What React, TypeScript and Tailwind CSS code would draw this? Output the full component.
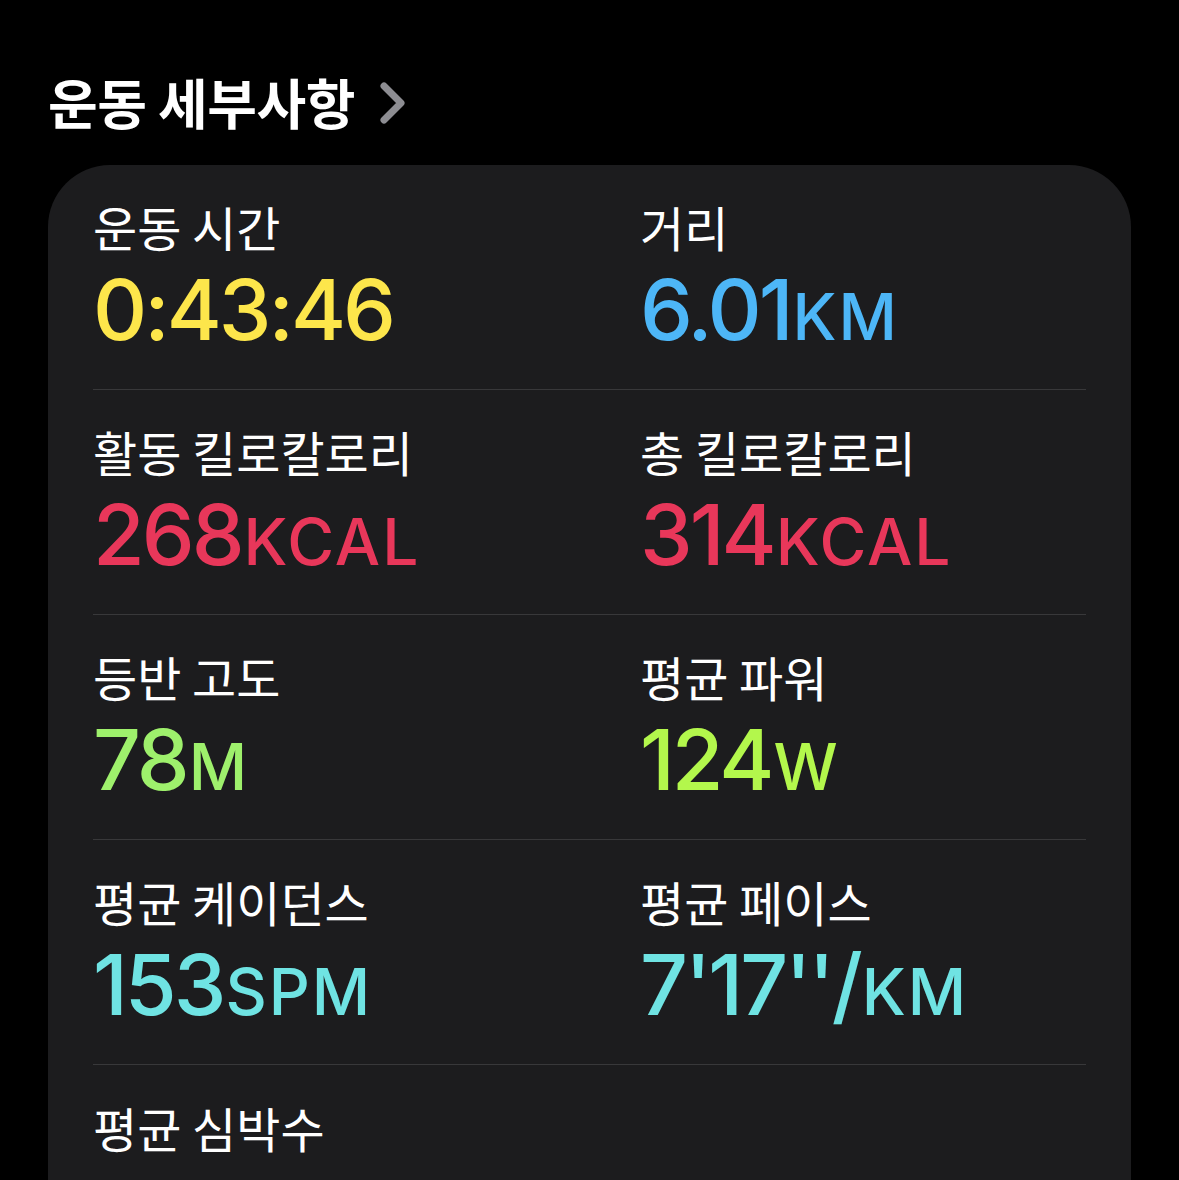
import React from "react";

const ko = { fontFamily: '"Noto Sans CJK KR", "Noto Sans", sans-serif' };
const num = { fontFamily: 'Inter, "Noto Sans", sans-serif' };

type Item = { label: string; value: string; unit: string; color: string };

const rows: Item[][] = [
  [
    { label: "운동 시간", value: "0:43:46", unit: "", color: "text-[#fde64b]" },
    { label: "거리", value: "6.01", unit: "KM", color: "text-[#4db6f7]" },
  ],
  [
    { label: "활동 킬로칼로리", value: "268", unit: "KCAL", color: "text-[#e8375a]" },
    { label: "총 킬로칼로리", value: "314", unit: "KCAL", color: "text-[#e8375a]" },
  ],
  [
    { label: "등반 고도", value: "78", unit: "M", color: "text-[#9ef06c]" },
    { label: "평균 파워", value: "124", unit: "W", color: "text-[#b3f74c]" },
  ],
  [
    { label: "평균 케이던스", value: "153", unit: "SPM", color: "text-[#6fe3e3]" },
    { label: "평균 페이스", value: "7'17''/", unit: "KM", color: "text-[#6fe3e3]" },
  ],
];

function Cell({ item }: { item: Item }) {
  return (
    <div className="flex flex-col">
      <div className="text-[48px] leading-[56px] text-white" style={ko}>
        {item.label}
      </div>
      <div
        className={`mt-[8px] flex items-baseline font-medium leading-[96px] ${item.color}`}
        style={num}
      >
        <span className="text-[84px] tracking-[-3px]">{item.value}</span>
        {item.unit && <span className="ml-[2px] text-[64px] tracking-[2px]">{item.unit}</span>}
      </div>
    </div>
  );
}

export default function App() {
  return (
    <div className="h-[1180px] w-full overflow-hidden bg-black">
      <div className="pl-[48px] pr-[48px] pt-[62px]">
        <div className="flex items-center gap-[24px]">
          <h1 className="text-[54px] font-bold leading-[80px] text-white tracking-[-0.5px]" style={ko}>
            운동 세부사항
          </h1>
          <svg width="28" height="44" viewBox="0 0 28 44" className="mt-[2px]">
            <path
              d="M5 5 L22 22 L5 39"
              fill="none"
              stroke="#8d8d92"
              strokeWidth="7"
              strokeLinecap="round"
              strokeLinejoin="round"
            />
          </svg>
        </div>
        <div className="mt-[23px] rounded-[62px] bg-[#1c1c1e] px-[45px] pb-[200px]">
          {rows.map((r, i) => (
            <div
              key={i}
              className="grid grid-cols-[547px_1fr] border-b border-[#38383a] pt-[33px] pb-[24px]"
            >
              <Cell item={r[0]} />
              <Cell item={r[1]} />
            </div>
          ))}
          <div className="pt-[34px]">
            <div className="text-[48px] leading-[56px] text-white" style={ko}>
              평균 심박수
            </div>
          </div>
        </div>
      </div>
    </div>
  );
}
